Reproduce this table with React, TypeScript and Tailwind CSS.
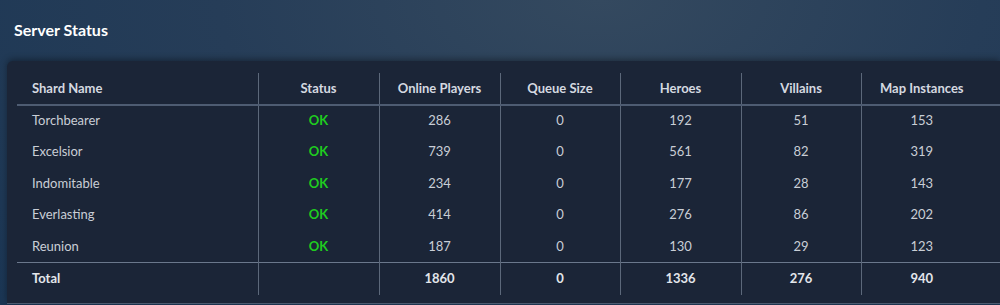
const shards = [
  { name: "Torchbearer", online: 286, queue: 0, heroes: 192, villains: 51, maps: 153 },
  { name: "Excelsior", online: 739, queue: 0, heroes: 561, villains: 82, maps: 319 },
  { name: "Indomitable", online: 234, queue: 0, heroes: 177, villains: 28, maps: 143 },
  { name: "Everlasting", online: 414, queue: 0, heroes: 276, villains: 86, maps: 202 },
  { name: "Reunion", online: 187, queue: 0, heroes: 130, villains: 29, maps: 123 },
];

const cols = ["Status", "Online Players", "Queue Size", "Heroes", "Villains", "Map Instances"];
const rowH = ["h-[31px]", "h-[32px]", "h-[31px]", "h-[32px]", "h-[31px]"];

export default function App() {
  const total = (k: "online" | "queue" | "heroes" | "villains" | "maps") =>
    shards.reduce((s, r) => s + r[k], 0);

  return (
    <div
      className="h-[305px] w-[1000px] overflow-hidden bg-[radial-gradient(ellipse_at_60%_0%,#34495f_0%,#263d58_45%,#1b3654_100%)] text-[13px] text-[#c9ced6]"
      style={{ fontFamily: "Lato, 'Noto Sans', sans-serif" }}
    >
      <h1 className="pl-[14px] pt-[20px] text-[16px] font-bold leading-[20px] text-white">Server Status</h1>
      <div className="ml-[7px] mt-[21px] h-[243px] overflow-hidden rounded-tl-md border-b border-[#4b5a70] bg-[#1b2537] pl-[10px] pt-[12px] shadow-[0_-2px_6px_rgba(0,0,0,0.35)]">
        <table className="w-[1020px] table-fixed border-collapse">
          <colgroup>
            <col className="w-[241px]" />
            <col className="w-[121px]" />
            <col className="w-[121px]" />
            <col className="w-[120px]" />
            <col className="w-[121px]" />
            <col className="w-[120px]" />
            <col className="w-[121px]" />
            <col />
          </colgroup>
          <thead>
            <tr className="h-[32px] border-b-2 border-[#4e5c72] font-bold text-[#d5d9e0]">
              <th className="pl-[15px] text-left">Shard Name</th>
              {cols.map((c) => (
                <th key={c} className="border-l border-[#5c687a] text-center">
                  {c}
                </th>
              ))}
              <th />
            </tr>
          </thead>
          <tbody>
            {shards.map((r, i) => (
              <tr key={r.name} className={rowH[i]}>
                <td className="pl-[15px]">{r.name}</td>
                <td className="border-l border-[#5c687a] text-center font-bold text-[#1fcc1f]">OK</td>
                <td className="border-l border-[#5c687a] text-center">{r.online}</td>
                <td className="border-l border-[#5c687a] text-center">{r.queue}</td>
                <td className="border-l border-[#5c687a] text-center">{r.heroes}</td>
                <td className="border-l border-[#5c687a] text-center">{r.villains}</td>
                <td className="border-l border-[#5c687a] text-center">{r.maps}</td>
                <td />
              </tr>
            ))}
            <tr className="h-[33px] border-t border-[#6b788c] font-bold text-[#e3e6eb]">
              <td className="pl-[15px]">Total</td>
              <td className="border-l border-[#5c687a]" />
              <td className="border-l border-[#5c687a] text-center">{total("online")}</td>
              <td className="border-l border-[#5c687a] text-center">{total("queue")}</td>
              <td className="border-l border-[#5c687a] text-center">{total("heroes")}</td>
              <td className="border-l border-[#5c687a] text-center">{total("villains")}</td>
              <td className="border-l border-[#5c687a] text-center">{total("maps")}</td>
              <td />
            </tr>
          </tbody>
        </table>
      </div>
    </div>
  );
}
